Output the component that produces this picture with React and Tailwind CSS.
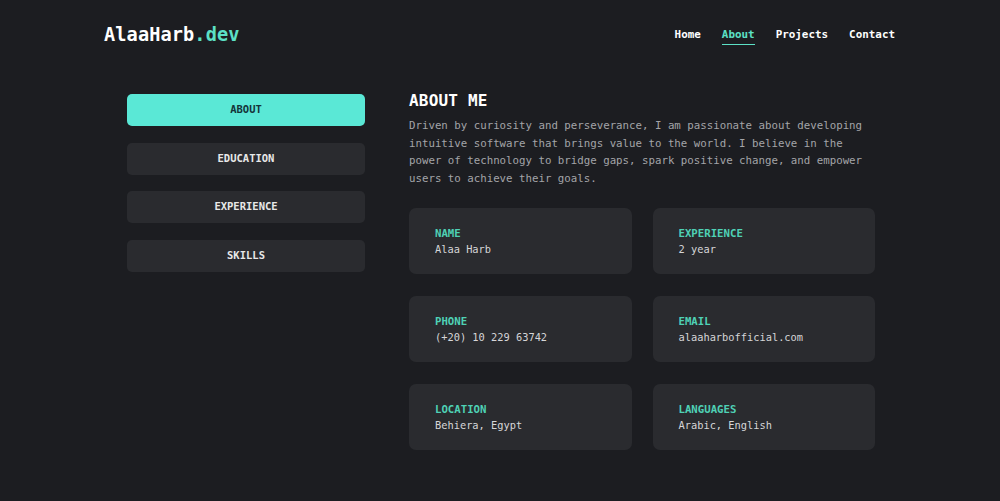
const mono = { fontFamily: '"DejaVu Sans Mono", "Liberation Mono", monospace' };

const tabs = ["ABOUT", "EDUCATION", "EXPERIENCE", "SKILLS"];

const facts = [
  ["NAME", "Alaa Harb"],
  ["EXPERIENCE", "2 year"],
  ["PHONE", "(+20) 10 229 63742"],
  ["EMAIL", "alaaharbofficial.com"],
  ["LOCATION", "Behiera, Egypt"],
  ["LANGUAGES", "Arabic, English"],
];

export default function App() {
  return (
    <div
      className="min-h-[501px] w-full bg-[#1c1d21] text-white antialiased"
      style={mono}
    >
      <header className="flex h-[70px] items-center justify-between pl-[104px] pr-[105px]">
        <div className="text-[18.6px] font-bold tracking-[0.1px]">
          <span className="text-white">AlaaHarb</span>
          <span className="text-[#5ce1c6]">.dev</span>
        </div>
        <nav className="flex items-center gap-[21px] text-[10.9px] font-bold">
          <a className="text-white">Home</a>
          <a className="translate-y-[1px] border-b-[1.5px] border-[#5ce1c6] pb-[1px] text-[#5ce1c6]">
            About
          </a>
          <a className="text-white">Projects</a>
          <a className="text-white">Contact</a>
        </nav>
      </header>

      <main className="flex gap-[44px] pl-[127px] pt-[24px]">
        <aside className="flex w-[238px] shrink-0 flex-col gap-[16.5px]">
          {tabs.map((t, i) => (
            <button
              key={t}
              className={
                i === 0
                  ? "flex h-[32px] items-center justify-center rounded-[5px] bg-[#5ae8d6] text-[10.5px] font-bold text-[#15353a]"
                  : "flex h-[32px] items-center justify-center rounded-[5px] bg-[#2a2b2f] text-[10.5px] font-bold text-[#e8e8e8]"
              }
            >
              {t}
            </button>
          ))}
        </aside>

        <section className="w-[466px]">
          <h1 className="text-[16px] font-bold leading-[14px] tracking-[0.2px] text-white">
            ABOUT ME
          </h1>
          <p className="mt-[9px] text-[10.75px] leading-[17.5px] text-[#a3a4a8]">
            Driven by curiosity and perseverance, I am passionate about developing
            intuitive software that brings value to the world. I believe in the
            power of technology to bridge gaps, spark positive change, and empower
            users to achieve their goals.
          </p>

          <div className="mt-[21px] grid grid-cols-2 gap-x-[21px] gap-y-[22px]">
            {facts.map(([label, value]) => (
              <div
                key={label}
                className="flex h-[66px] flex-col justify-center rounded-[7px] bg-[#2a2b2f] pl-[26px] pt-[1px]"
              >
                <div className="text-[10.7px] font-bold leading-[15px] text-[#4fd1b5]">
                  {label}
                </div>
                <div className="text-[10.35px] leading-[16px] text-[#d6d6d8]">
                  {value}
                </div>
              </div>
            ))}
          </div>
        </section>
      </main>
    </div>
  );
}
